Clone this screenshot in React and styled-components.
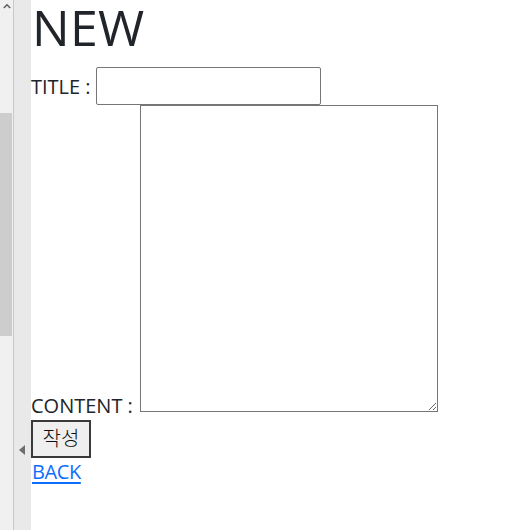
import React from "react";
import styled, { createGlobalStyle } from "styled-components";

const GlobalStyle = createGlobalStyle`
  html, body {
    margin: 0;
    padding: 0;
    background: #fff;
  }
  body {
    font-family: "Open Sans", "Noto Sans CJK KR", sans-serif;
    color: #212529;
  }
`;

const Page = styled.div`
  display: flex;
  width: 532px;
  height: 530px;
  overflow: hidden;
`;

const Track = styled.div`
  width: 13px;
  height: 100%;
  background: #f0f0f0;
  border-right: 1px solid #c9c9c9;
  display: flex;
  flex-direction: column;
  align-items: flex-start;
`;

const ArrowUp = styled.div`
  width: 13px;
  height: 16px;
  display: flex;
  justify-content: center;
  padding-top: 3px;
  box-sizing: border-box;
`;

const Thumb = styled.div`
  width: 12px;
  height: 223px;
  margin-top: 97px;
  background: #cdcdcd;
`;

const Gutter = styled.div`
  width: 17px;
  height: 100%;
  background: #e9e9e9;
  display: flex;
  flex-direction: column;
  align-items: flex-start;
  padding: 445px 0 0 5px;
  box-sizing: border-box;
`;

const Handle = styled.div`
  width: 0;
  height: 0;
  border-top: 5.5px solid transparent;
  border-bottom: 5.5px solid transparent;
  border-right: 6px solid #6e6e6e;
`;

const Main = styled.main`
  flex: 1;
  display: flex;
  flex-direction: column;
  align-items: flex-start;
`;

const Heading = styled.h1`
  margin: 0 0 12px 1px;
  font-size: 50px;
  font-weight: 400;
  line-height: 55px;
  letter-spacing: 0.3px;
`;

const Field = styled.div`
  display: flex;
  align-items: flex-end;
  gap: ${(p) => p.$gap || 6}px;
`;

const Label = styled.label`
  font-size: 20px;
  line-height: 24px;
  margin-bottom: ${(p) => p.$drop || 0}px;
  white-space: nowrap;
`;

const TextInput = styled.input`
  width: 225px;
  height: 38px;
  box-sizing: border-box;
  border: 1px solid #767676;
  border-radius: 2px;
  font-size: 20px;
  font-family: inherit;
  padding: 1px 4px;
  outline: none;
`;

const TextArea = styled.textarea`
  width: 298px;
  height: 307px;
  box-sizing: border-box;
  border: 1px solid #767676;
  border-radius: 0;
  margin-bottom: 6px;
  font-family: inherit;
  font-size: 16px;
  outline: none;
`;

const SubmitButton = styled.button`
  margin-top: 2px;
  width: 60px;
  height: 38px;
  box-sizing: border-box;
  border: 2px solid #3a3a3a;
  border-radius: 0;
  background: #efefef;
  color: #111;
  font-family: "Noto Sans CJK KR", sans-serif;
  font-size: 20px;
  font-weight: 300;
  line-height: 1;
  padding: 0 0 3px;
`;

const BackLink = styled.a`
  display: block;
  margin-left: 1px;
  font-size: 20px;
  line-height: 28px;
  letter-spacing: -0.4px;
  color: #0d6efd;
  text-decoration: underline;
  text-underline-offset: 3px;
`;

export default function App() {
  return (
    <Page>
      <GlobalStyle />
      <Track>
        <ArrowUp>
          <svg width="8" height="6" viewBox="0 0 8 6">
            <path d="M0.8 5 L4 1.8 L7.2 5" fill="none" stroke="#606060" strokeWidth="1.6" />
          </svg>
        </ArrowUp>
        <Thumb />
      </Track>
      <Gutter>
        <Handle />
      </Gutter>
      <Main>
        <Heading>NEW</Heading>
        <Field $gap={5}>
          <Label $drop={6}>TITLE :</Label>
          <TextInput type="text" />
        </Field>
        <Field $gap={7}>
          <Label>CONTENT :</Label>
          <TextArea />
        </Field>
        <SubmitButton type="button">작성</SubmitButton>
        <BackLink href="#">BACK</BackLink>
      </Main>
    </Page>
  );
}
